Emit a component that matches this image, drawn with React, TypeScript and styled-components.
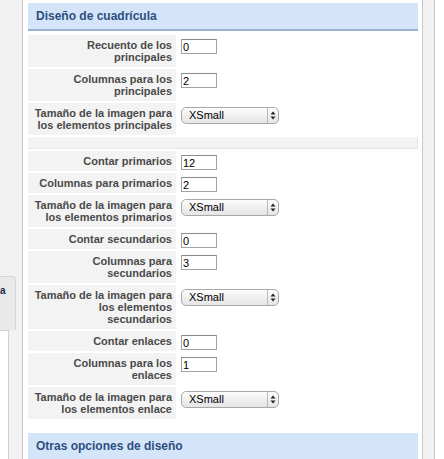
import React from "react";
import styled, { createGlobalStyle } from "styled-components";

const GlobalStyle = createGlobalStyle`
  html, body {
    margin: 0;
    padding: 0;
    background: #ffffff;
  }
  body {
    font-family: "Liberation Sans", Arial, sans-serif;
  }
`;

const Page = styled.div`
  display: flex;
  width: 444px;
  height: 459px;
  overflow: hidden;
  background: #ffffff;
`;

const Sidebar = styled.div`
  flex: none;
  width: 23px;
  box-sizing: border-box;
  background: #f2f2f2;
  border-right: 1px solid #c8c8c8;
  display: flex;
  flex-direction: column;
  padding-top: 276px;
`;

const SideTab = styled.div`
  width: 16px;
  height: 54px;
  box-sizing: border-box;
  background: #e9e9e9;
  border-top: 1px solid #d6d6d6;
  border-right: 1px solid #d6d6d6;
  border-top-right-radius: 4px;
  overflow: hidden;
  padding-top: 9px;
  font-size: 10px;
  font-weight: bold;
  line-height: 10px;
  color: #1c2c4c;
`;

const SideTabText = styled.span`
  display: block;
`;

const SideLower = styled.div`
  flex: 1;
  width: 9px;
  box-sizing: border-box;
  background: #ffffff;
  border-top: 1px solid #d0d0d0;
  border-right: 1px solid #d0d0d0;
`;

const Main = styled.div`
  flex: none;
  width: 399px;
  box-sizing: border-box;
  padding: 3px 4px 0 5px;
`;

const RightStrip = styled.div`
  flex: none;
  width: 13px;
  box-sizing: border-box;
  background: #f2f2f2;
  border-left: 1px solid #c8c8c8;
  border-right: 1px solid #c8c8c8;
`;

const SectionHeader = styled.div<{ $gap?: number }>`
  height: 26px;
  margin-top: ${(p) => p.$gap ?? 0}px;
  background: #d4e5f9;
  border-bottom: 2px solid #99b3ce;
  display: flex;
  align-items: center;
  padding-left: 8px;
  font-size: 12px;
  font-weight: bold;
  color: #2e4e7f;
`;

const FormGrid = styled.div`
  display: grid;
  grid-template-columns: 148px 1fr;
  row-gap: 2px;
  padding-top: 4px;
`;

const Label = styled.div`
  box-sizing: border-box;
  background: #f3f3f3;
  padding: 4px 4px;
  text-align: right;
  font-size: 11px;
  line-height: 12px;
  font-weight: bold;
  color: #4a4a4a;
`;

const ValueCell = styled.div`
  padding: 4px 0 0 5px;
`;

const Divider = styled.div`
  grid-column: 1 / -1;
  height: 12px;
  box-sizing: border-box;
  background: #f3f3f3;
  border-bottom: 1px solid #e6e6e6;
  border-right: 1px solid #e6e6e6;
`;

const TextInput = styled.input`
  display: block;
  width: 36px;
  height: 15px;
  box-sizing: border-box;
  margin: 0;
  padding: 0 1px;
  border: 1px solid #a3a3a3;
  border-top-color: #8a8a8a;
  font-family: "Liberation Sans", Arial, sans-serif;
  font-size: 11px;
  color: #000;
  background: #fff;
  outline: none;
`;

const SelectBox = styled.div`
  display: flex;
  align-items: stretch;
  width: 98px;
  height: 17px;
  box-sizing: border-box;
  border: 1px solid #a8a8a8;
  border-radius: 5px;
  background: linear-gradient(#fdfdfd, #ededed 60%, #e6e6e6);
  font-size: 11px;
  color: #000;
`;

const SelectText = styled.span`
  flex: 1;
  padding-left: 7px;
  line-height: 15px;
`;

const SelectArrows = styled.span`
  flex: none;
  width: 10px;
  border-left: 1px solid #b8b8b8;
  display: flex;
  align-items: center;
  justify-content: center;
`;

type Row =
  | { kind: "input"; label: string; value: string }
  | { kind: "select"; label: string; value: string }
  | { kind: "divider" };

const rows: Row[] = [
  { kind: "input", label: "Recuento de los principales", value: "0" },
  { kind: "input", label: "Columnas para los principales", value: "2" },
  { kind: "select", label: "Tamaño de la imagen para los elementos principales", value: "XSmall" },
  { kind: "divider" },
  { kind: "input", label: "Contar primarios", value: "12" },
  { kind: "input", label: "Columnas para primarios", value: "2" },
  { kind: "select", label: "Tamaño de la imagen para los elementos primarios", value: "XSmall" },
  { kind: "input", label: "Contar secundarios", value: "0" },
  { kind: "input", label: "Columnas para secundarios", value: "3" },
  { kind: "select", label: "Tamaño de la imagen para los elementos secundarios", value: "XSmall" },
  { kind: "input", label: "Contar enlaces", value: "0" },
  { kind: "input", label: "Columnas para los enlaces", value: "1" },
  { kind: "select", label: "Tamaño de la imagen para los elementos enlace", value: "XSmall" },
];

const UpDown = () => (
  <svg width="6" height="9" viewBox="0 0 6 9">
    <path d="M3 0.5 L5.5 3.5 L0.5 3.5 Z" fill="#222" />
    <path d="M3 8.5 L5.5 5.5 L0.5 5.5 Z" fill="#222" />
  </svg>
);

export default function App() {
  return (
    <>
      <GlobalStyle />
      <Page>
        <Sidebar>
          <SideTab>
            <SideTabText>a</SideTabText>
          </SideTab>
          <SideLower />
        </Sidebar>
        <Main>
          <SectionHeader>Diseño de cuadrícula</SectionHeader>
          <FormGrid>
            {rows.map((r, i) => {
              if (r.kind === "divider") return <Divider key={i} />;
              return (
                <React.Fragment key={i}>
                  <Label>{r.label}</Label>
                  <ValueCell>
                    {r.kind === "input" ? (
                      <TextInput defaultValue={r.value} />
                    ) : (
                      <SelectBox>
                        <SelectText>{r.value}</SelectText>
                        <SelectArrows>
                          <UpDown />
                        </SelectArrows>
                      </SelectBox>
                    )}
                  </ValueCell>
                </React.Fragment>
              );
            })}
          </FormGrid>
          <SectionHeader $gap={14}>Otras opciones de diseño</SectionHeader>
        </Main>
        <RightStrip />
      </Page>
    </>
  );
}
